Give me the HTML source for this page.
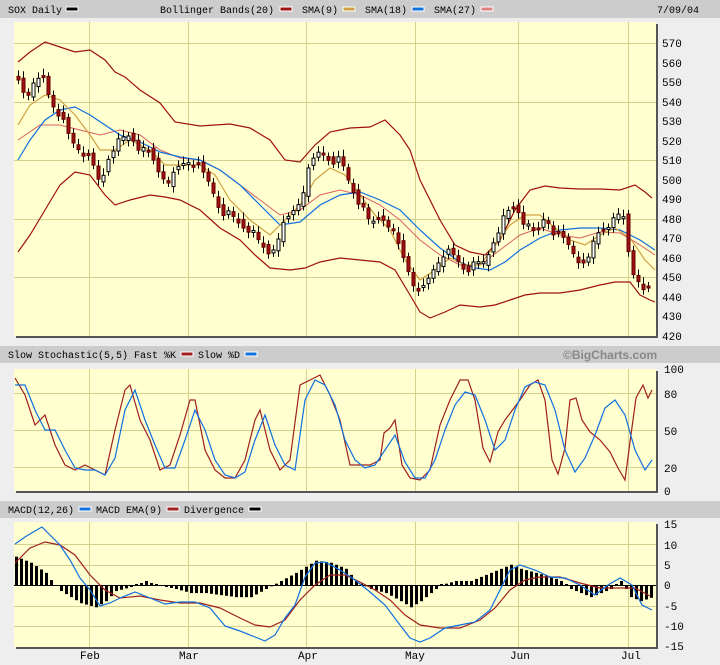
<!DOCTYPE html>
<html><head><meta charset="utf-8"><style>
body{margin:0;background:#eeeeee;width:720px;height:665px;overflow:hidden;font-family:"Liberation Mono",monospace;font-size:11px;}
svg{position:absolute;left:0;top:0}
</style></head><body>
<svg id="s" width="720" height="665" xmlns="http://www.w3.org/2000/svg" font-family="Liberation Mono, monospace" font-size="10">
<rect x="0" y="0" width="720" height="665" fill="#eeeeee"/>
<rect x="0" y="0" width="720" height="18" fill="#cccccc"/>
<rect x="0" y="346" width="720" height="17" fill="#cccccc"/>
<rect x="0" y="501" width="720" height="17" fill="#cccccc"/>
<text x="8" y="13">SOX Daily</text><rect x="66" y="7" width="12" height="4" fill="#000" stroke="#fff"/>
<text x="160" y="13">Bollinger Bands(20)</text><rect x="280" y="7" width="12" height="4" fill="#a01010" stroke="#fff"/>
<text x="302" y="13">SMA(9)</text><rect x="343" y="7" width="12" height="4" fill="#d0a040" stroke="#fff"/>
<text x="365" y="13">SMA(18)</text><rect x="412" y="7" width="12" height="4" fill="#1070e0" stroke="#fff"/>
<text x="434" y="13">SMA(27)</text><rect x="481" y="7" width="12" height="4" fill="#e08080" stroke="#fff"/>
<text x="657" y="13">7/09/04</text>
<text x="8" y="358">Slow Stochastic(5,5) Fast %K</text><rect x="181" y="352" width="12" height="4" fill="#a02020" stroke="#fff"/>
<text x="198" y="358">Slow %D</text><rect x="245" y="352" width="12" height="4" fill="#1070e0" stroke="#fff"/>
<text x="563" y="359" fill="#888" font-family="Liberation Sans, sans-serif" font-weight="bold" font-size="12">©BigCharts.com</text>
<text x="8" y="513">MACD(12,26)</text><rect x="79" y="507" width="12" height="4" fill="#1070e0" stroke="#fff"/>
<text x="96" y="513">MACD EMA(9)</text><rect x="167" y="507" width="12" height="4" fill="#a02020" stroke="#fff"/>
<text x="184" y="513">Divergence</text><rect x="249" y="507" width="12" height="4" fill="#000" stroke="#fff"/>
<rect x="16" y="24" width="642" height="314" fill="#555"/>
<rect x="14" y="22" width="642" height="314" fill="#ffffd0"/>
<rect x="16" y="371" width="642" height="122" fill="#555"/>
<rect x="14" y="369" width="642" height="122" fill="#ffffd0"/>
<rect x="16" y="524" width="642" height="125" fill="#555"/>
<rect x="14" y="522" width="642" height="125" fill="#ffffd0"/>
<g stroke="#d4d090" stroke-width="1">
<line x1="14" x2="656" y1="43.5" y2="43.5"/><line x1="14" x2="656" y1="102.5" y2="102.5"/><line x1="14" x2="656" y1="160.5" y2="160.5"/><line x1="14" x2="656" y1="219.5" y2="219.5"/><line x1="14" x2="656" y1="277.5" y2="277.5"/>
<line x1="14" x2="656" y1="393.5" y2="393.5"/><line x1="14" x2="656" y1="430.5" y2="430.5"/><line x1="14" x2="656" y1="467.5" y2="467.5"/>
<line x1="14" x2="656" y1="544.5" y2="544.5"/><line x1="14" x2="656" y1="565.5" y2="565.5"/><line x1="14" x2="656" y1="606.5" y2="606.5"/><line x1="14" x2="656" y1="626.5" y2="626.5"/>
<line x1="89.5" x2="89.5" y1="22" y2="336"/><line x1="188.5" x2="188.5" y1="22" y2="336"/><line x1="306.5" x2="306.5" y1="22" y2="336"/><line x1="415.5" x2="415.5" y1="22" y2="336"/><line x1="518.5" x2="518.5" y1="22" y2="336"/><line x1="628.5" x2="628.5" y1="22" y2="336"/>
<line x1="89.5" x2="89.5" y1="369" y2="491"/><line x1="188.5" x2="188.5" y1="369" y2="491"/><line x1="306.5" x2="306.5" y1="369" y2="491"/><line x1="415.5" x2="415.5" y1="369" y2="491"/><line x1="518.5" x2="518.5" y1="369" y2="491"/><line x1="628.5" x2="628.5" y1="369" y2="491"/>
<line x1="89.5" x2="89.5" y1="522" y2="647"/><line x1="188.5" x2="188.5" y1="522" y2="647"/><line x1="306.5" x2="306.5" y1="522" y2="647"/><line x1="415.5" x2="415.5" y1="522" y2="647"/><line x1="518.5" x2="518.5" y1="522" y2="647"/><line x1="628.5" x2="628.5" y1="522" y2="647"/>
</g>
<line x1="14" x2="656" y1="585.5" y2="585.5" stroke="#000"/>
<g fill="none" stroke-width="1.2">
<polyline stroke="#a01010" points="18,62 30,52 45,42 60,47 75,52 90,50 105,60 115,72 125,77 140,90 160,103 175,122 200,126 230,124 250,128 270,140 285,160 300,162 315,145 330,132 350,128 370,127 385,120 400,135 410,150 420,180 440,220 455,245 470,252 485,255 500,240 515,210 530,190 545,186 560,188 580,189 600,189 620,190 635,185 645,192 652,198"/>
<polyline stroke="#a01010" points="18,252 30,235 45,210 60,185 75,172 90,175 105,195 115,205 130,200 150,195 165,197 180,200 200,210 220,228 240,240 255,255 270,268 290,270 305,268 320,262 340,258 360,260 380,262 395,270 410,295 420,312 430,318 445,312 460,305 480,307 495,305 510,300 525,295 540,293 560,293 580,290 600,285 615,282 630,282 640,295 650,300 655,302"/>
<polyline stroke="#d86060" stroke-width="1" points="18,140 40,125 60,125 80,130 100,135 120,130 140,135 160,150 180,158 200,160 220,170 240,185 260,200 280,215 300,210 320,195 340,190 360,195 380,205 400,220 420,240 440,255 460,265 480,265 500,250 520,235 540,228 560,235 580,238 600,232 620,233 640,245 655,255"/>
<polyline stroke="#1070e0" points="18,160 30,140 45,120 60,110 75,107 90,115 105,125 120,135 140,142 160,152 180,157 200,160 220,170 240,185 260,205 280,225 300,222 320,205 340,195 360,192 380,200 400,210 420,230 440,248 460,262 475,268 490,270 505,262 520,250 540,238 560,230 580,228 600,228 620,230 640,240 655,250"/>
<polyline stroke="#d0a040" points="18,125 30,105 45,95 60,100 75,115 90,135 100,150 115,150 130,140 150,150 165,165 180,165 200,165 215,175 230,200 250,220 270,235 285,220 300,205 315,180 330,168 345,175 360,195 375,215 390,230 405,260 420,280 435,270 450,258 465,265 480,265 495,245 510,225 525,215 540,215 555,228 570,240 585,245 600,235 615,228 630,238 645,260 655,270"/>
</g>
<g id="candles"></g>
<g id="hist"></g>
<g fill="none" stroke-width="1.2">
<polyline stroke="#a02020" points="15,378 25,395 35,425 45,415 55,445 65,465 75,470 85,465 95,470 105,475 115,430 125,390 130,385 140,420 150,440 160,470 170,465 180,435 190,400 195,400 205,450 215,470 225,478 235,478 245,460 255,420 260,410 270,450 280,470 290,460 300,385 310,380 320,375 330,395 340,420 350,465 360,465 370,465 380,460 384,433 390,428 395,420 402,465 410,478 420,480 430,470 440,425 450,400 460,380 468,380 475,400 483,448 490,462 498,432 505,420 520,400 530,385 538,380 545,400 552,460 558,474 565,448 570,400 576,398 582,420 590,432 600,440 610,452 618,468 625,480 630,442 636,398 643,385 648,398 652,390"/>
<polyline stroke="#1070e0" points="15,385 25,385 35,410 45,430 55,430 65,450 75,468 85,470 95,470 105,475 115,458 125,410 135,390 145,420 155,445 165,468 175,468 185,440 195,410 205,430 215,460 225,475 235,478 245,472 255,440 265,415 275,445 285,465 295,470 305,400 315,380 325,385 335,405 345,440 355,460 365,468 375,465 385,450 395,435 405,462 415,478 425,478 435,460 445,430 455,405 465,392 475,395 485,420 495,450 505,440 515,410 525,387 535,382 545,385 555,410 565,450 575,472 585,458 595,435 605,408 615,400 625,415 635,450 645,470 652,460"/>
<polyline stroke="#a02020" points="15,563 30,548 45,542 60,545 75,555 90,575 105,590 120,598 140,596 160,600 180,603 200,603 220,608 240,618 255,625 270,627 285,620 300,600 315,585 330,575 345,575 360,582 375,590 390,600 405,615 420,625 440,628 460,628 480,620 495,608 510,590 525,580 540,577 560,577 580,583 600,588 620,588 635,588 650,596"/>
<polyline stroke="#1070e0" points="15,544 25,537 35,531 42,527 50,535 60,545 70,560 80,578 90,590 100,606 110,603 120,598 135,592 150,598 165,604 180,602 195,602 210,608 225,626 240,631 255,637 265,641 275,635 285,618 295,605 305,577 315,563 325,562 340,570 355,580 370,592 385,605 400,625 410,638 420,642 430,638 445,628 460,625 475,622 490,610 500,590 510,570 520,565 535,570 550,577 565,578 580,585 595,595 608,585 620,578 632,585 642,605 652,610"/>
</g>
<g font-size="11" fill="#000">
<text x="662" y="47">570</text><text x="662" y="67">560</text><text x="662" y="86">550</text><text x="662" y="106">540</text><text x="662" y="125">530</text><text x="662" y="145">520</text><text x="662" y="164">510</text><text x="662" y="184">500</text><text x="662" y="203">490</text><text x="662" y="223">480</text><text x="662" y="242">470</text><text x="662" y="262">460</text><text x="662" y="281">450</text><text x="662" y="301">440</text><text x="662" y="320">430</text><text x="662" y="340">420</text>
<text x="664" y="373">100</text><text x="664" y="398">80</text><text x="664" y="435">50</text><text x="664" y="472">20</text><text x="664" y="495">0</text>
<text x="664" y="528">15</text><text x="664" y="549">10</text><text x="664" y="569">5</text><text x="664" y="589">0</text><text x="664" y="610">-5</text><text x="664" y="630">-10</text><text x="664" y="650">-15</text>
<text x="80" y="659">Feb</text><text x="179" y="659">Mar</text><text x="298" y="659">Apr</text><text x="405" y="659">May</text><text x="510" y="659">Jun</text><text x="621" y="659">Jul</text>
</g>
</svg>
<script>
(function(){
function interp(pts,x){for(var i=0;i<pts.length-1;i++){if(x>=pts[i][0]&&x<=pts[i+1][0]){var t=(x-pts[i][0])/(pts[i+1][0]-pts[i][0]);return pts[i][1]+t*(pts[i+1][1]-pts[i][1]);}}return pts[x<pts[0][0]?0:pts.length-1][1];}
var NS="http://www.w3.org/2000/svg";
function el(t,a,p){var e=document.createElementNS(NS,t);for(var k in a)e.setAttribute(k,a[k]);p.appendChild(e);}
var P=[[18,80],[25,95],[35,85],[42,75],[50,100],[60,115],[70,140],[80,150],[90,160],[100,185],[110,150],[120,140],[130,135],[140,150],[150,155],[160,175],[170,180],[180,165],[190,160],[200,170],[210,185],[220,210],[230,215],[240,225],[250,230],[260,245],[270,255],[280,230],[290,215],[300,200],[310,165],[320,150],[330,160],[340,160],[350,185],[360,205],[370,225],[380,215],[390,225],[400,250],[410,275],[418,295],[425,285],[435,265],[445,250],[455,258],[465,270],[475,265],[485,262],[495,235],[505,215],[515,205],[525,225],[535,235],[545,215],[555,235],[565,240],[575,255],[585,270],[595,235],[605,225],[615,220],[622,210],[628,250],[635,280],[642,293],[650,285]];
var g=document.getElementById('candles');var prev=interp(P,13);
for(var x=18;x<=652;x+=5){var c=interp(P,x)+((x*7)%11-5)*0.8;var o=prev+((x*13)%9-4)*0.9;var t0=Math.min(o,c),b0=Math.max(o,c);if(b0-t0<2)b0=t0+2;
el('line',{x1:x+0.5,x2:x+0.5,y1:t0-4-(x%4),y2:b0+4+(x%3),stroke:'#000'},g);
if(c>o){el('rect',{x:x-1,y:t0,width:3,height:b0-t0,fill:'#a01010',stroke:'#600'},g);}else{el('rect',{x:x-1,y:t0,width:3,height:b0-t0,fill:'#fff',stroke:'#000'},g);}prev=c;}
var H=[[15,7],[30,5.5],[45,3],[52,0.5],[60,-1.5],[70,-3],[80,-4.5],[95,-5.5],[105,-4],[115,-1.5],[130,-0.5],[145,1],[155,0],[175,-1],[190,-2],[205,-2],[220,-2.5],[235,-3],[250,-3],[265,-1],[280,1],[295,3],[315,6],[330,5.5],[345,4],[355,1],[370,-1],[385,-2],[400,-4],[410,-5.5],[420,-4],[430,-2],[440,0],[455,1],[470,1],[485,2.5],[500,4],[510,5],[520,4],[535,3],[550,2],[560,1],[570,-1],[580,-2],[590,-3],[600,-2],[610,-1],[620,1],[630,-3],[640,-4],[652,-3]];
var h=document.getElementById('hist');
for(var x=15;x<=652;x+=5){var v=interp(H,x)*4.05;if(Math.abs(v)<1)v=v<0?-1:1;el('rect',{x:x,y:Math.min(585,585-v),width:3,height:Math.abs(v),fill:'#000'},h);}
})();
</script>
</body></html>
